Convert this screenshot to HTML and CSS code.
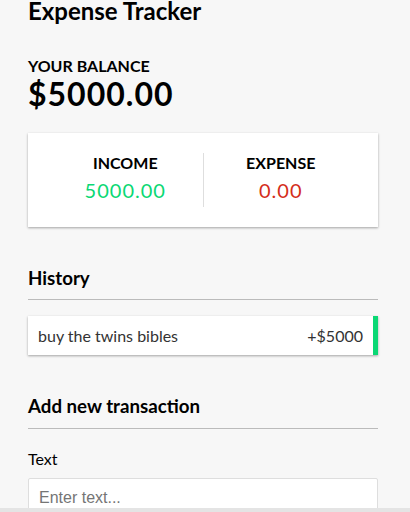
FILE: index.html
```html
<!DOCTYPE html>
<html lang="en">
<head>
<meta charset="UTF-8">
<title>Expense Tracker</title>
<link rel="stylesheet" href="styles.css">
</head>
<body>
<main class="page">
  <h2 class="title">Expense Tracker</h2>
  <div class="container">
    <h4>Your Balance</h4>
    <h1 class="balance">$5000.00</h1>

    <div class="inc-exp-container">
      <div class="inc-col">
        <h4>Income</h4>
        <p class="money plus">5000.00</p>
      </div>
      <div class="inc-col">
        <h4>Expense</h4>
        <p class="money minus">0.00</p>
      </div>
    </div>

    <h3>History</h3>
    <ul class="list">
      <li class="plus">buy the twins bibles <span>+$5000</span></li>
    </ul>

    <h3>Add new transaction</h3>
    <form class="form">
      <div class="form-control">
        <label for="text">Text</label>
        <input type="text" id="text" placeholder="Enter text...">
      </div>
    </form>
  </div>
</main>
<div class="scroll-strip"></div>
</body>
</html>
```

FILE: styles.css
```css
* { box-sizing: border-box; }

body {
  margin: 0;
  background-color: #f7f7f7;
  font-family: 'Lato', 'Noto Sans', sans-serif;
  color: #000;
}

.page {
  width: 350px;
  margin-left: 28px;
}

.title {
  font-size: 24px;
  font-weight: bold;
  margin: -3px 0 0;
  line-height: 1.2;
}

.container {
  padding-top: 30px;
}

h1 {
  letter-spacing: 1px;
  margin: 0;
  font-size: 32px;
  line-height: 1.2;
}

h3 {
  font-size: 18.72px;
  line-height: 1.2;
  border-bottom: 1px solid #bbb;
  padding-bottom: 10px;
  margin: 40px 0 10px;
}

h4 {
  margin: 0;
  font-size: 16px;
  line-height: 1.2;
  text-transform: uppercase;
}

.inc-exp-container {
  background-color: #fff;
  box-shadow: 0 1px 3px rgba(0,0,0,0.12), 0 1px 2px rgba(0,0,0,0.24);
  padding: 20px;
  display: flex;
  justify-content: space-between;
  margin: 20px 0;
}

.inc-col {
  flex: 1;
  text-align: center;
}

.inc-col:first-of-type {
  border-right: 1px solid #dedede;
}

.money {
  font-size: 20px;
  line-height: 1.2;
  letter-spacing: 1px;
  margin: 5px 0;
}

.money.plus { color: #0ad874; }
.money.minus { color: #d42e1a; }

.list {
  list-style-type: none;
  padding: 0;
  margin: 16px 0 40px;
}

.list li {
  background-color: #fff;
  box-shadow: 0 1px 3px rgba(0,0,0,0.12), 0 1px 2px rgba(0,0,0,0.24);
  color: #333;
  display: flex;
  justify-content: space-between;
  padding: 10px;
  margin: 10px 0;
  font-size: 16px;
  line-height: 1.2;
}

.list li.plus { border-right: 5px solid #0ad874; }

.form { margin: 0; }

label {
  display: inline-block;
  margin: 10px 0;
  font-size: 16px;
  line-height: 1.2;
}

input[type='text'] {
  border: 1px solid #dedede;
  border-radius: 2px;
  display: block;
  font-family: 'Liberation Sans', Arial, sans-serif;
  font-size: 16px;
  padding: 10px;
  width: 100%;
  background: #fff;
}

input::placeholder { color: #757575; }

.scroll-strip {
  position: fixed;
  left: 0;
  right: 0;
  bottom: 0;
  height: 4px;
  background: #e4e4e4;
}
```
